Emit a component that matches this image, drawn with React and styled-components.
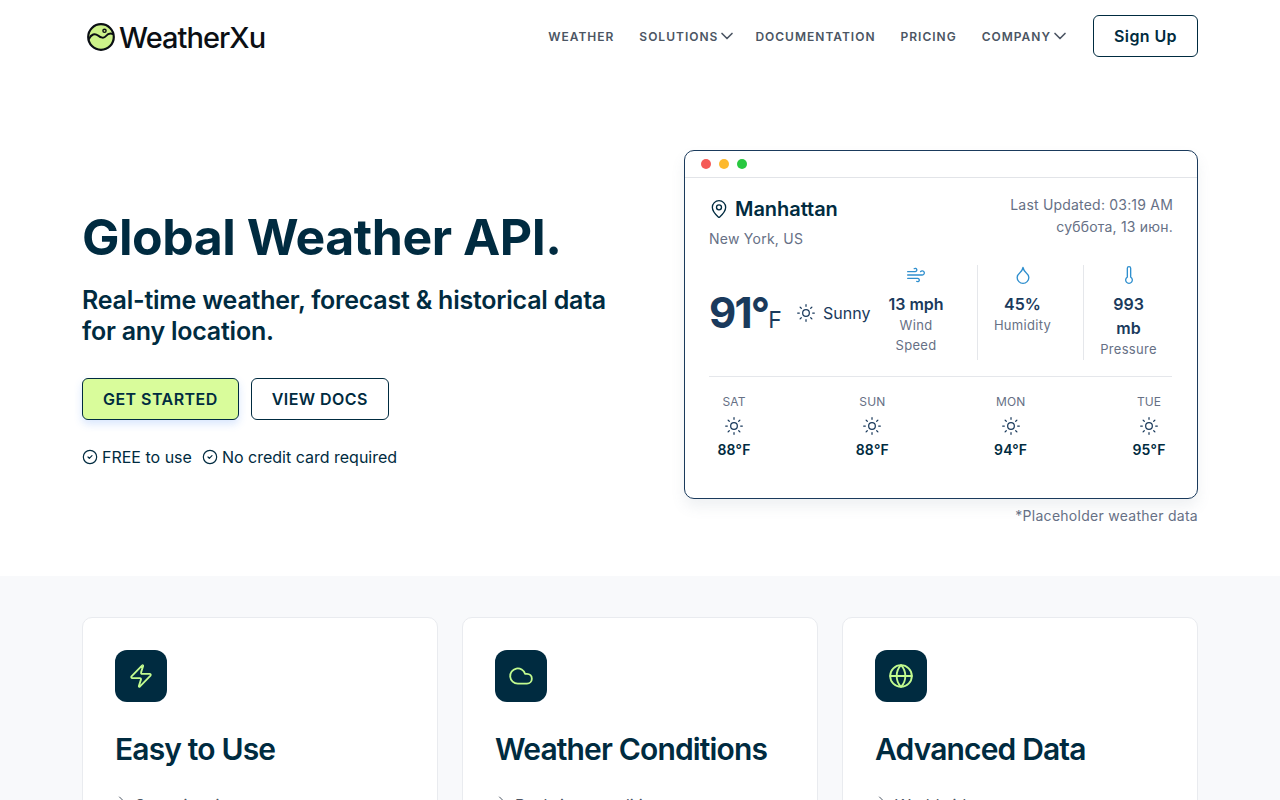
import React from 'react';
import styled, {createGlobalStyle} from 'styled-components';
import {ChevronDown, ChevronRight, CircleCheck, Cloud, Droplet, Globe, MapPin, Sun, Thermometer, Wind, Zap} from 'lucide-react';

const GlobalStyle = createGlobalStyle`
    html, body {
        margin: 0;
        padding: 0;
        height: 800px;
        overflow: hidden;
        background: #fff;
        font-family: Inter, "Liberation Sans", sans-serif;
        color: #002b40;
    }
    * {
        box-sizing: border-box;
    }
`

const Container = styled.div`
    width: 1116px;
    margin: 0 auto;
`
const Header = styled(Container)`
    height: 72px;
    display: flex;
    align-items: center;
    justify-content: space-between;
`
const Logo = styled.div`
    display: flex;
    align-items: center;
    gap: 3px;
    margin: 2px 0 0 4px;
    font-size: 29px;
    font-weight: 500;
    letter-spacing: -0.95px;
    color: #0b0f14;
`
const Nav = styled.nav`
    display: flex;
    align-items: center;
`
const NavItem = styled.a`
    display: flex;
    align-items: center;
    margin-right: ${props => props.$gap || 25}px;
    font-size: 12px;
    font-weight: 600;
    letter-spacing: 1px;
    color: #4b5563;
    svg {
        margin-left: -1px;
    }
`
const SignUp = styled.button`
    width: 105px;
    height: 42px;
    background: #fff;
    border: 1px solid #002b40;
    border-radius: 6px;
    font: 600 16px Inter, sans-serif;
    letter-spacing: 0.4px;
    color: #002b40;
`
const Hero = styled(Container)`
    height: 504px;
    display: flex;
    justify-content: space-between;
`
const HeroText = styled.div`
    width: 560px;
    padding-top: 133px;
`
const Title = styled.h1`
    margin: 0;
    font-size: 50px;
    line-height: 64px;
    font-weight: 700;
    letter-spacing: -0.5px;
    white-space: nowrap;
`
const Subtitle = styled.p`
    margin: 16px 0 0;
    font-size: 25px;
    line-height: 31px;
    font-weight: 600;
    letter-spacing: -0.23px;
    white-space: nowrap;
`
const Buttons = styled.div`
    display: flex;
    gap: 12px;
    margin-top: 31px;
`
const HeroButton = styled.button`
    height: 42px;
    padding: 0 20px;
    border: 1px solid #002b40;
    border-radius: 6px;
    background: ${props => props.$primary ? '#d9fc9b' : '#fff'};
    box-shadow: ${props => props.$primary ? '0 4px 8px rgba(59, 130, 246, 0.2)' : 'none'};
    font: 600 16px Inter, sans-serif;
    letter-spacing: 0.45px;
    color: #002b40;
`
const Perks = styled.div`
    display: flex;
    gap: 10px;
    margin-top: 25px;
`
const Perk = styled.span`
    display: flex;
    align-items: center;
    gap: 4px;
    font-size: 16px;
    line-height: 24px;
`
const WidgetColumn = styled.div`
    width: 514px;
    padding-top: 78px;
`
const Widget = styled.div`
    height: 349px;
    border: 1px solid #1a3a5c;
    border-radius: 10px;
    background: #fff;
    box-shadow: 0 8px 14px rgba(100, 116, 139, 0.1);
`
const WindowBar = styled.div`
    height: 27px;
    display: flex;
    align-items: center;
    gap: 8px;
    padding-left: 16px;
    border-bottom: 1px solid #e2e4e8;
`
const WindowDot = styled.i`
    width: 10px;
    height: 10px;
    border-radius: 50%;
    background: ${props => props.$color};
`
const WidgetBody = styled.div`
    padding: 18px 24px 0;
`
const TopRow = styled.div`
    display: flex;
    justify-content: space-between;
`
const Place = styled.div`
    display: flex;
    align-items: center;
    gap: 6px;
    height: 26px;
    font-size: 20px;
    font-weight: 600;
    letter-spacing: -0.05px;
`
const Region = styled.div`
    margin-top: 7px;
    font-size: 14px;
    line-height: 20px;
    letter-spacing: 0.25px;
    color: #667085;
`
const Updated = styled.div`
    margin-top: -2px;
    text-align: right;
    font-size: 14px;
    line-height: 22px;
    color: #667085;
    letter-spacing: 0.2px;
`
const Current = styled.div`
    display: flex;
    height: 95px;
    margin-top: 16px;
`
const Temperature = styled.div`
    width: 87px;
    padding-top: 22px;
    font-size: 42px;
    line-height: 52px;
    font-weight: 700;
    letter-spacing: -1.8px;
    color: #1a3a5c;
    span {
        font-size: 23px;
        font-weight: 400;
        letter-spacing: 0;
    }
`
const Condition = styled.div`
    display: flex;
    align-items: center;
    gap: 7px;
    width: 75px;
    height: 95px;
    font-size: 16px;
    color: #1a3a5c;
`
const Stat = styled.div`
    width: 90px;
    flex-shrink: 0;
    margin-left: ${props => props.$divider ? 16 : 0}px;
    padding: 0 16px;
    display: flex;
    flex-direction: column;
    align-items: center;
    text-align: center;
    border-left: ${props => props.$divider ? '1px solid #e5e7eb' : 'none'};
    svg {
        color: #2f8fce;
        margin-bottom: 7px;
        flex-shrink: 0;
    }
`
const StatValue = styled.div`
    font-size: 16px;
    line-height: 24px;
    font-weight: 600;
    color: #1a3a5c;
`
const StatLabel = styled.div`
    margin-top: -1px;
    font-size: 13px;
    line-height: 20px;
    letter-spacing: 0.3px;
    color: #667085;
`
const Forecast = styled.div`
    display: flex;
    justify-content: space-between;
    margin: 16px 1px 0 0;
    padding: 16px 0 0 2px;
    border-top: 1px solid #e5e7eb;
`
const Day = styled.div`
    width: 46px;
    display: flex;
    flex-direction: column;
    align-items: center;
    svg {
        color: #1a3a5c;
        margin: 5px 0 4px;
    }
`
const DayName = styled.div`
    font-size: 12px;
    line-height: 18px;
    letter-spacing: 0.1px;
    color: #667085;
`
const DayTemp = styled.div`
    font-size: 14px;
    line-height: 20px;
    font-weight: 600;
    letter-spacing: 0.2px;
    white-space: nowrap;
`
const Note = styled.div`
    margin-top: 7px;
    text-align: right;
    font-size: 14px;
    line-height: 20px;
    letter-spacing: 0.27px;
    color: #667085;
`
const Features = styled.section`
    height: 224px;
    padding-top: 41px;
    background: #f8f9fb;
`
const Cards = styled(Container)`
    display: grid;
    grid-template-columns: repeat(3, 356px);
    gap: 24px;
`
const Card = styled.div`
    height: 400px;
    padding: 32px;
    background: #fff;
    border: 1px solid #e9ebef;
    border-radius: 10px;
`
const IconBox = styled.div`
    width: 52px;
    height: 52px;
    display: flex;
    align-items: center;
    justify-content: center;
    border-radius: 12px;
    background: #002b40;
    color: #c2fb8f;
`
const CardTitle = styled.h2`
    margin: 24px 0 0;
    font-size: 30px;
    line-height: 46px;
    font-weight: 600;
    letter-spacing: -0.85px;
`
const List = styled.ul`
    list-style: none;
    margin: 21px 0 0;
    padding: 0;
`
const ListItem = styled.li`
    display: flex;
    align-items: flex-start;
    gap: 8px;
    font-size: 16px;
    line-height: 24px;
    color: #4b5563;
    svg {
        margin-top: 1px;
    }
`

const LogoMark = () => (
    <svg width="30" height="30" viewBox="0 0 30 30" fill="none">
        <circle cx="15" cy="15" r="12.8" fill="#cdf28a" stroke="#0b0f14" strokeWidth="2.2"/>
        <path d="M3 17c2-5 6-6 9-3.5s6 3 8 .5 4-3 7-2" stroke="#0b0f14" strokeWidth="2" strokeLinecap="round"/>
        <circle cx="18.5" cy="8.8" r="1.6" stroke="#0b0f14" strokeWidth="1.4"/>
    </svg>
);

const stats = [
    {icon: Wind, value: '13 mph', label: 'Wind Speed'},
    {icon: Droplet, value: '45%', label: 'Humidity', divider: true},
    {icon: Thermometer, value: '993 mb', label: 'Pressure', divider: true},
];

const days = [
    {name: 'SAT', temp: '88°F'},
    {name: 'SUN', temp: '88°F'},
    {name: 'MON', temp: '94°F'},
    {name: 'TUE', temp: '95°F'},
];

const cards = [
    {icon: Zap, title: 'Easy to Use', item: 'Setup in minutes'},
    {icon: Cloud, title: 'Weather Conditions', item: 'Real-time conditions'},
    {icon: Globe, title: 'Advanced Data', item: 'Worldwide coverage'},
];

const App = () => {
    return (
        <>
            <GlobalStyle/>
            <Header as="header">
                <Logo><LogoMark/>WeatherXu</Logo>
                <Nav>
                    <NavItem>WEATHER</NavItem>
                    <NavItem $gap={18}>SOLUTIONS <ChevronDown size={20} strokeWidth={2}/></NavItem>
                    <NavItem>DOCUMENTATION</NavItem>
                    <NavItem>PRICING</NavItem>
                    <NavItem $gap={23}>COMPANY <ChevronDown size={20} strokeWidth={2}/></NavItem>
                    <SignUp>Sign Up</SignUp>
                </Nav>
            </Header>
            <Hero as="main">
                <HeroText>
                    <Title>Global Weather API.</Title>
                    <Subtitle>Real-time weather, forecast &amp; historical data<br/>for any location.</Subtitle>
                    <Buttons>
                        <HeroButton $primary>GET STARTED</HeroButton>
                        <HeroButton>VIEW DOCS</HeroButton>
                    </Buttons>
                    <Perks>
                        <Perk><CircleCheck size={16} strokeWidth={1.8}/>FREE to use</Perk>
                        <Perk><CircleCheck size={16} strokeWidth={1.8}/>No credit card required</Perk>
                    </Perks>
                </HeroText>
                <WidgetColumn>
                    <Widget>
                        <WindowBar>
                            <WindowDot $color="#f55a57"/>
                            <WindowDot $color="#fdb92e"/>
                            <WindowDot $color="#28c840"/>
                        </WindowBar>
                        <WidgetBody>
                            <TopRow>
                                <div>
                                    <Place><MapPin size={20} strokeWidth={1.6}/>Manhattan</Place>
                                    <Region>New York, US</Region>
                                </div>
                                <Updated>Last Updated: 03:19 AM<br/>суббота, 13 июн.</Updated>
                            </TopRow>
                            <Current>
                                <Temperature>91°<span>F</span></Temperature>
                                <Condition><Sun size={20} strokeWidth={1.5}/>Sunny</Condition>
                                {stats.map(stat => (
                                    <Stat key={stat.label} $divider={stat.divider}>
                                        <stat.icon size={20} strokeWidth={1.6}/>
                                        <StatValue>{stat.value}</StatValue>
                                        <StatLabel>{stat.label}</StatLabel>
                                    </Stat>
                                ))}
                            </Current>
                            <Forecast>
                                {days.map(day => (
                                    <Day key={day.name}>
                                        <DayName>{day.name}</DayName>
                                        <Sun size={20} strokeWidth={1.5}/>
                                        <DayTemp>{day.temp}</DayTemp>
                                    </Day>
                                ))}
                            </Forecast>
                        </WidgetBody>
                    </Widget>
                    <Note>*Placeholder weather data</Note>
                </WidgetColumn>
            </Hero>
            <Features>
                <Cards>
                    {cards.map(card => (
                        <Card key={card.title}>
                            <IconBox><card.icon size={26} strokeWidth={1.7}/></IconBox>
                            <CardTitle>{card.title}</CardTitle>
                            <List>
                                <ListItem><ChevronRight size={12}/>{card.item}</ListItem>
                            </List>
                        </Card>
                    ))}
                </Cards>
            </Features>
        </>
    );
}

export default App;
